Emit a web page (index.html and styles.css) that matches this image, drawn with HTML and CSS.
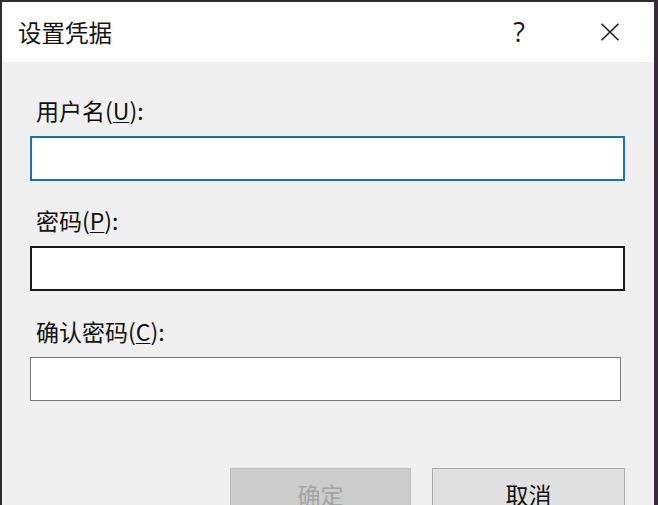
FILE: index.html
```html
<!DOCTYPE html>
<html lang="zh-CN">
<head>
<meta charset="utf-8">
<title>设置凭据</title>
<link rel="stylesheet" href="styles.css">
</head>
<body>
<div class="window">
  <div class="titlebar">
    <div class="title">设置凭据</div>
    <div class="spacer"></div>
    <div class="help">?</div>
    <div class="close">
      <svg width="20" height="18" viewBox="0 0 20 18"><path d="M1.5 0.8 L18.5 17.2 M18.5 0.8 L1.5 17.2" stroke="#1a1a1a" stroke-width="1.5" fill="none"/></svg>
    </div>
  </div>
  <div class="content">
    <div class="label first">用户名(<u>U</u>):</div>
    <div class="input focused"></div>
    <div class="label">密码(<u>P</u>):</div>
    <div class="input dark"></div>
    <div class="label third">确认密码(<u>C</u>):</div>
    <div class="input plain"></div>
    <div class="buttons">
      <div class="btn disabled">确定</div>
      <div class="btn normal">取消</div>
    </div>
  </div>
</div>
</body>
</html>
```
FILE: styles.css
```css
html, body {
  margin: 0;
  padding: 0;
  width: 658px;
  height: 505px;
  overflow: hidden;
  background: #f0f0f0;
}
.window {
  box-sizing: border-box;
  width: 658px;
  height: 505px;
  border-left: 2px solid #2e2e2e;
  border-right: 4px solid #3a2b3a;
  border-top: 2px solid #2e2e2e;
  background: #f0f0f0;
  font-family: "Noto Sans CJK SC", "Noto Sans", sans-serif;
  color: #111;
  overflow: hidden;
}
.titlebar {
  height: 60px;
  background: #ffffff;
  display: flex;
  align-items: center;
  padding-left: 16px;
  padding-right: 22px;
}
.title {
  font-size: 23.5px;
  line-height: 30px;
  color: #141414;
}
.spacer { flex: 1; }
.help {
  width: 40px;
  text-align: center;
  font-family: "Open Sans", "Noto Sans", sans-serif;
  font-size: 27px;
  line-height: 30px;
  color: #1a1a1a;
  margin-right: 49px;
  margin-top: 0;
}
.close {
  width: 44px;
  display: flex;
  justify-content: center;
  align-items: center;
  height: 30px;
}
.content {
  padding: 36px 29px 0 28px;
}
.label {
  font-size: 23px;
  line-height: 24px;
  height: 24px;
  padding-left: 6px;
  margin-bottom: 14px;
  margin-top: 27px;
  color: #111;
}
.label.first { margin-top: 0; }
.label.third { margin-top: 28px; }
.label u {
  text-decoration-thickness: 1px;
  text-underline-offset: 2px;
}
.input {
  box-sizing: border-box;
  height: 45px;
  background: #fff;
}
.input.focused {
  border: 2px solid #1a73b8;
}
.input.dark {
  border: 2px solid #1a1a1a;
}
.input.plain {
  height: 44px;
  width: 591px;
  border: 1px solid #7a7a7a;
}
.buttons {
  display: flex;
  justify-content: flex-end;
  gap: 21px;
  margin-top: 67px;
}
.btn {
  box-sizing: border-box;
  height: 46px;
  font-size: 23px;
  line-height: 50px;
  text-align: center;
}
.btn.disabled {
  width: 181px;
  background: #cccccc;
  border: 1px solid #bfbfbf;
  color: #a3a3a3;
}
.btn.normal {
  width: 193px;
  background: #e1e1e1;
  border: 1px solid #adadad;
  color: #111;
}
```
